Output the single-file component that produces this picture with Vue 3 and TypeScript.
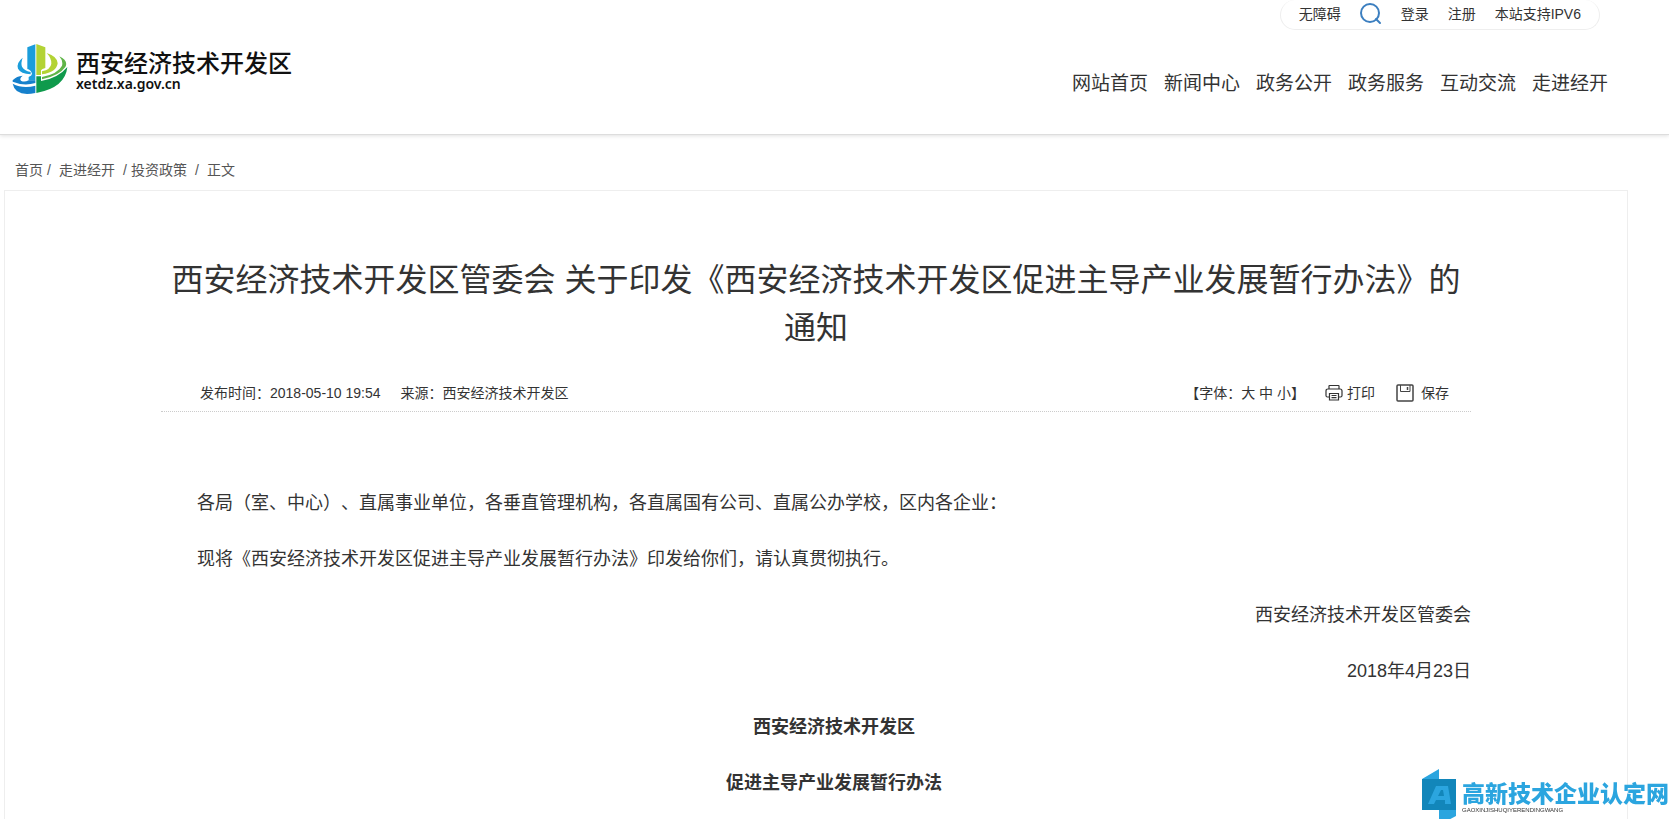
<script setup lang="ts">
interface LinkItem {
  label: string
  href: string
}

const navItems: LinkItem[] = [
  { label: '网站首页', href: '#home' },
  { label: '新闻中心', href: '#news' },
  { label: '政务公开', href: '#open' },
  { label: '政务服务', href: '#service' },
  { label: '互动交流', href: '#interact' },
  { label: '走进经开', href: '#about' },
]

const fontSizes: string[] = ['大', '中', '小']
</script>

<template>
  <div class="page">
    <header class="site-header">
      <a class="brand" href="#home">
        <svg class="brand-mark" viewBox="34 38 168 156" aria-hidden="true">
          <path fill="#1b9ddb" d="M80 51 L104 42 V150 H84 V140 Q94 136 94 130 Q90 118 80 116 Z" />
          <path fill="#1b9ddb" d="M66 82 Q46 98 52 115 Q60 130 90 132 V125 Q70 121 64 109 Q60 98 66 82 Z" />
          <path fill="#b3d334" d="M107 41 L134 51 V113 Q124 115 121 120 V134 H107 Z" />
          <path fill="#b3d334" d="M138 68 Q170 78 171 99 Q168 126 124 132 V123 Q150 117 152 100 Q153 84 138 68 Z" />
          <path fill="#5fb548" d="M176 78 Q204 92 194 110 Q176 136 124 147 V140 Q172 130 184 106 Q188 92 176 78 Z" />
          <path fill="#1580cc" d="M36 150 Q48 137 66 136 Q54 146 62 152 Q72 156 84 150 H104 V158 Q70 168 36 154 Z" />
          <path fill="#1580cc" d="M36 160 Q66 176 104 166 V188 Q44 200 36 160 Z" />
          <path fill="#0f9a4c" d="M107 138 H121 V152 Q172 144 200 110 Q194 172 107 188 Z" />
        </svg>
        <span class="brand-text">
          <span class="brand-name">西安经济技术开发区</span>
          <span class="brand-url">xetdz.xa.gov.cn</span>
        </span>
      </a>
      <div class="header-side">
        <div class="tools">
          <a href="#accessible">无障碍</a>
          <button class="search" type="button" aria-label="搜索">
            <svg viewBox="0 0 22 22" fill="none" stroke="#3c7fc0" stroke-width="2" aria-hidden="true">
              <circle cx="10" cy="10" r="9" />
              <path d="M16 16 L20 20" stroke-linecap="round" />
            </svg>
          </button>
          <a href="#login">登录</a>
          <a href="#register">注册</a>
          <span>本站支持IPV6</span>
        </div>
        <nav class="main-nav">
          <a v-for="item in navItems" :key="item.href" :href="item.href">{{ item.label }}</a>
        </nav>
      </div>
    </header>

    <nav class="crumbs" aria-label="当前位置">
      <a href="#home">首页</a><span class="sep">/</span>
      <a class="crumb-wide" href="#about">走进经开</a><span class="sep">/</span>
      <a href="#invest">投资政策</a><span class="sep sep-wide">/</span>
      <span>正文</span>
    </nav>

    <main class="panel">
      <h1>西安经济技术开发区管委会 关于印发《西安经济技术开发区促进主导产业发展暂行办法》的通知</h1>
      <div class="meta">
        <span>发布时间：2018-05-10 19:54</span>
        <span>来源：西安经济技术开发区</span>
        <div class="meta-tools">
          <span class="sizes">【字体：<template v-for="(size, i) in fontSizes" :key="size"><button type="button">{{ size }}</button><template v-if="i < fontSizes.length - 1">&nbsp;</template></template>】</span>
          <button class="action print" type="button">
            <svg viewBox="0 0 18 18" fill="none" stroke="#333" stroke-width="1.2" aria-hidden="true">
              <path d="M4 5 V2 Q4 1.500 4.500 1.500 H13.500 Q14 1.500 14 2 V5" />
              <path d="M4 13 H2.500 Q1 13 1 11.500 V7 Q1 5 3 5 H15 Q17 5 17 7 V11.500 Q17 13 15.500 13 H14" />
              <path d="M4.500 9.500 H13.500 V16 H4.500 Z M6.500 11.500 H11.500 M6.500 13.700 H11.500" />
            </svg>
            打印
          </button>
          <button class="action save" type="button">
            <svg viewBox="0 0 18 18" fill="none" stroke="#444" stroke-width="1.500" aria-hidden="true">
              <path d="M2 1 H16 Q17 1 17 2 V16 Q17 17 16 17 H2 Q1 17 1 16 V2 Q1 1 2 1 Z" />
              <path d="M4.500 1 V7.500 H14 V1" stroke-width="1" />
              <path d="M11.500 3 V6" />
            </svg>
            保存
          </button>
        </div>
      </div>
      <article class="content">
        <p>各局（室、中心）、直属事业单位，各垂直管理机构，各直属国有公司、直属公办学校，区内各企业：</p>
        <p>现将《西安经济技术开发区促进主导产业发展暂行办法》印发给你们，请认真贯彻执行。</p>
        <p class="sign">西安经济技术开发区管委会</p>
        <p class="sign">2018年4月23日</p>
        <p class="heading"><strong>西安经济技术开发区</strong></p>
        <p class="heading"><strong>促进主导产业发展暂行办法</strong></p>
      </article>
    </main>

    <aside class="watermark">
      <svg viewBox="0 0 34 52" aria-hidden="true">
        <path fill="#2ba5df" d="M0 10 L17 0 V10 Z M17 41 H34 V47 L17 56 Z" />
        <path fill="#1286ba" d="M0 10 H34 V41 H0 Z" />
        <path fill="#2ba5df" fill-rule="evenodd" d="M14 17 H26 L29 35 H23 V31 H14 L12 35 H6 Z M19 21 L16 27 H22 L21 21 Z" />
      </svg>
      <div class="watermark-text">
        <span class="watermark-name">高新技术企业认定网</span>
        <span class="watermark-pinyin">GAOXINJISHUQIYERENDINGWANG</span>
      </div>
    </aside>
  </div>
</template>

<style>
body {
  margin: 0;
  background: #fff;
}
</style>

<style scoped>
.page {
  display: flex;
  flex-direction: column;
  height: 100vh;
  overflow: hidden;
  color: #333;
  font-family: "Liberation Sans", "Noto Sans CJK SC", sans-serif;
  font-size: 14px;
  line-height: 20px;
  text-spacing-trim: space-all;
}

a {
  color: inherit;
  text-decoration: none;
}

button {
  padding: 0;
  border: 0;
  background: none;
  color: inherit;
  font: inherit;
  cursor: pointer;
}

.site-header {
  display: flex;
  flex: none;
  justify-content: space-between;
  height: 135px;
  padding: 0 61px 0 12px;
  border-bottom: 1px solid #ddd;
  box-shadow: 0 1px 4px rgba(0, 0, 0, 0.12);
  box-sizing: border-box;
}

.brand {
  display: flex;
  align-items: flex-start;
  gap: 8px;
  padding-top: 43px;
  color: #111;
}

.brand-mark {
  width: 56px;
  height: 52px;
}

.brand-text {
  display: flex;
  flex-direction: column;
  padding-top: 9px;
}

.brand-name {
  font-size: 24px;
  font-weight: 500;
  line-height: 24px;
}

.brand-url {
  font-family: "Noto Sans", sans-serif;
  font-size: 14px;
  font-weight: 600;
  line-height: 16px;
}

.header-side {
  display: flex;
  flex-direction: column;
  align-items: flex-end;
}

.tools {
  display: flex;
  align-items: center;
  gap: 19px;
  height: 28px;
  margin-right: 8px;
  padding: 0 18px 1px;
  border: 1px solid #eee;
  border-top: 0;
  border-radius: 15px;
}

.search {
  display: flex;
}

.search svg {
  width: 22px;
  height: 22px;
}

.main-nav {
  display: flex;
  gap: 16px;
  margin-top: 40px;
  font-size: 19px;
  line-height: 28px;
}

.crumbs {
  display: flex;
  flex: none;
  padding: 25px 15px 10px;
  color: #555;
}

.sep {
  width: 4px;
  margin: 0 4px;
}

.crumb-wide {
  padding: 0 4px;
}

.sep-wide {
  margin: 0 8px;
}

.panel {
  flex: 1;
  margin: 0 41px 0 4px;
  padding: 65px 156px 0;
  border: 1px solid #eee;
  border-bottom: 0;
}

h1 {
  margin: 0;
  font-size: 32px;
  font-weight: 400;
  line-height: 48px;
  text-align: center;
}

.meta {
  display: flex;
  gap: 20px;
  margin-top: 31px;
  padding: 0 22px 8px 39px;
  border-bottom: 1px dotted #ccc;
}

.meta-tools {
  display: flex;
  margin-left: auto;
}

.action {
  display: flex;
  align-items: center;
}

.action svg {
  width: 18px;
  height: 18px;
}

.print {
  gap: 4px;
  margin-left: 20px;
}

.save {
  gap: 7px;
  margin-left: 21px;
}

.content {
  display: flex;
  flex-direction: column;
  gap: 20px;
  margin-top: 73px;
  font-size: 18px;
  line-height: 36px;
}

.content p {
  margin: 0;
  text-indent: 2em;
}

.content .sign {
  text-align: right;
}

.content .heading {
  text-align: center;
}

.watermark {
  position: fixed;
  right: 0;
  bottom: -2px;
  display: flex;
  gap: 6px;
}

.watermark svg {
  width: 34px;
  height: 52px;
}

.watermark-text {
  display: flex;
  flex-direction: column;
  padding-top: 13px;
}

.watermark-name {
  color: #2ba5df;
  font-size: 23px;
  font-weight: 900;
  line-height: 24px;
}

.watermark-pinyin {
  font-size: 6px;
  line-height: 8px;
}
</style>
